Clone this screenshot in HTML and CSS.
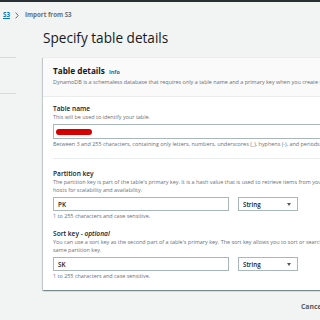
FILE: index.html
```html
<!DOCTYPE html>
<html lang="en">
<head>
  <meta charset="UTF-8">
  <meta name="viewport" content="width=device-width, initial-scale=1.0">
  <title>Specify table details</title>
  <link rel="stylesheet" href="styles.css">
</head>
<body>
  <div class="topbar"></div>
  <nav class="crumbs">
    <a class="crumb-link" href="#">S3</a>
    <span class="crumb-sep">
      <svg width="4" height="7" viewBox="0 0 4 7"><path d="M0.6 0.6 L3.2 3.5 L0.6 6.4" fill="none" stroke="#687078" stroke-width="1"/></svg>
    </span>
    <span class="crumb-current">Import from S3</span>
  </nav>

  <div class="layout">
    <aside class="side">
      <div class="side-line"></div>
      <div class="side-line"></div>
    </aside>

    <main class="main">
      <h1 class="page-title">Specify table details</h1>

      <section class="card">
        <header class="card-head">
          <h2 class="card-title">Table details <a class="info" href="#">Info</a></h2>
          <p class="card-desc">DynamoDB is a schemaless database that requires only a table name and a primary key when you create the table.</p>
        </header>

        <div class="card-body">
          <div class="field">
            <label class="field-label">Table name</label>
            <p class="field-desc">This will be used to identify your table.</p>
            <div class="input wide"><span class="redacted"></span></div>
            <p class="field-hint">Between 3 and 255 characters, containing only letters, numbers, underscores (_), hyphens (-), and periods (.).</p>
          </div>

          <hr class="divider">

          <div class="field">
            <label class="field-label">Partition key</label>
            <p class="field-desc">The partition key is part of the table's primary key. It is a hash value that is used to retrieve items from your table and allocate data across hosts for scalability and availability.</p>
            <div class="key-row">
              <div class="input key">PK</div>
              <div class="select">String <span class="caret"></span></div>
            </div>
            <p class="field-hint">1 to 255 characters and case sensitive.</p>
          </div>

          <div class="field">
            <label class="field-label">Sort key - <em>optional</em></label>
            <p class="field-desc">You can use a sort key as the second part of a table's primary key. The sort key allows you to sort or search among all items sharing the same partition key.</p>
            <div class="key-row">
              <div class="input key">SK</div>
              <div class="select">String <span class="caret"></span></div>
            </div>
            <p class="field-hint">1 to 255 characters and case sensitive.</p>
          </div>
        </div>
      </section>

      <div class="actions">
        <a class="btn-link" href="#">Cancel</a>
        <a class="btn-link" href="#">Previous</a>
      </div>
    </main>
  </div>
</body>
</html>
```

FILE: styles.css
```css
body {
  margin: 0;
  background-color: #f2f3f3;
  color: #16191f;
  font-family: 'Open Sans', 'Noto Sans', sans-serif;
  overflow: hidden;
}

.topbar {
  height: 2px;
  background-color: #2a2f36;
}

.crumbs {
  display: flex;
  align-items: center;
  gap: 5px;
  height: 10px;
  margin-top: 8px;
  padding-left: 3px;
  font-size: 6.2px;
  line-height: 10px;
}

.crumb-link {
  color: #0073bb;
  font-weight: 700;
  text-decoration: underline;
}

.crumb-sep {
  display: flex;
  align-items: center;
  margin-right: 1px;
}

.crumb-current {
  color: #687078;
  font-weight: 700;
}

.layout {
  display: grid;
  grid-template-columns: 16px 400px;
  column-gap: 27px;
}

.side {
  padding-top: 37px;
}

.side-line {
  height: 1px;
  background-color: #d5dbdb;
  margin-bottom: 35px;
}

.page-title {
  margin: 9px 0 10px;
  font-size: 13.6px;
  line-height: 18px;
  font-weight: 400;
}

.card {
  background-color: #fff;
  border-top: 1px solid #eaeded;
  box-shadow: 0 1px 1px rgba(0, 28, 36, 0.3), 1px 1px 1px rgba(0, 28, 36, 0.15), -1px 1px 1px rgba(0, 28, 36, 0.15);
}

.card-head {
  background-color: #fafafa;
  border-bottom: 1px solid #eaeded;
  padding: 8px 10px 10px;
}

.card-title {
  margin: 0;
  font-size: 8.2px;
  line-height: 10px;
  font-weight: 700;
}

.info {
  margin-left: 2px;
  color: #0073bb;
  font-size: 5.4px;
  font-weight: 700;
  text-decoration: none;
}

.card-desc,
.field-desc,
.field-hint {
  margin: 0;
  color: #687078;
  font-size: 5.45px;
  line-height: 8px;
  white-space: nowrap;
}

.card-desc {
  margin-top: 2px;
  line-height: 7px;
}

.card-body {
  padding: 7px 10px 10px;
}

.field + .field {
  margin-top: 9px;
}

.field-label {
  display: block;
  font-size: 6.6px;
  line-height: 9px;
  font-weight: 600;
}

.field-label em {
  font-weight: 600;
}

.field-desc {
  white-space: normal;
  width: 350px;
}

.field .field-desc + .input,
.field .field-desc + .key-row {
  margin-top: 3px;
}

.input {
  box-sizing: border-box;
  height: 14px;
  border: 1px solid #aab7b8;
  display: flex;
  align-items: center;
  padding: 0 4px;
  font-size: 6.4px;
  font-weight: 600;
}

.input.wide {
  width: 380px;
  height: 15px;
  padding: 0 2px;
}

.redacted {
  width: 36px;
  height: 6px;
  border-radius: 3px;
  background-color: #d40000;
}

.key-row {
  display: flex;
  gap: 9px;
}

.input.key {
  width: 176px;
}

.select {
  box-sizing: border-box;
  width: 60px;
  height: 14px;
  border: 1px solid #aab7b8;
  display: flex;
  align-items: center;
  justify-content: space-between;
  padding: 0 6px 0 4px;
  font-size: 6.2px;
  font-weight: 600;
}

.caret {
  width: 0;
  height: 0;
  border-left: 2.5px solid transparent;
  border-right: 2.5px solid transparent;
  border-top: 3px solid #545b64;
}

.field-hint {
  margin-top: 2px;
  line-height: 7px;
}

.divider {
  border: none;
  border-top: 1px solid #eaeded;
  margin: 10px 0 10px;
}

.actions {
  display: flex;
  gap: 14px;
  padding: 12px 0 0 258px;
}

.btn-link {
  color: #545b64;
  font-size: 6.8px;
  line-height: 10px;
  font-weight: 700;
  text-decoration: none;
}
```
